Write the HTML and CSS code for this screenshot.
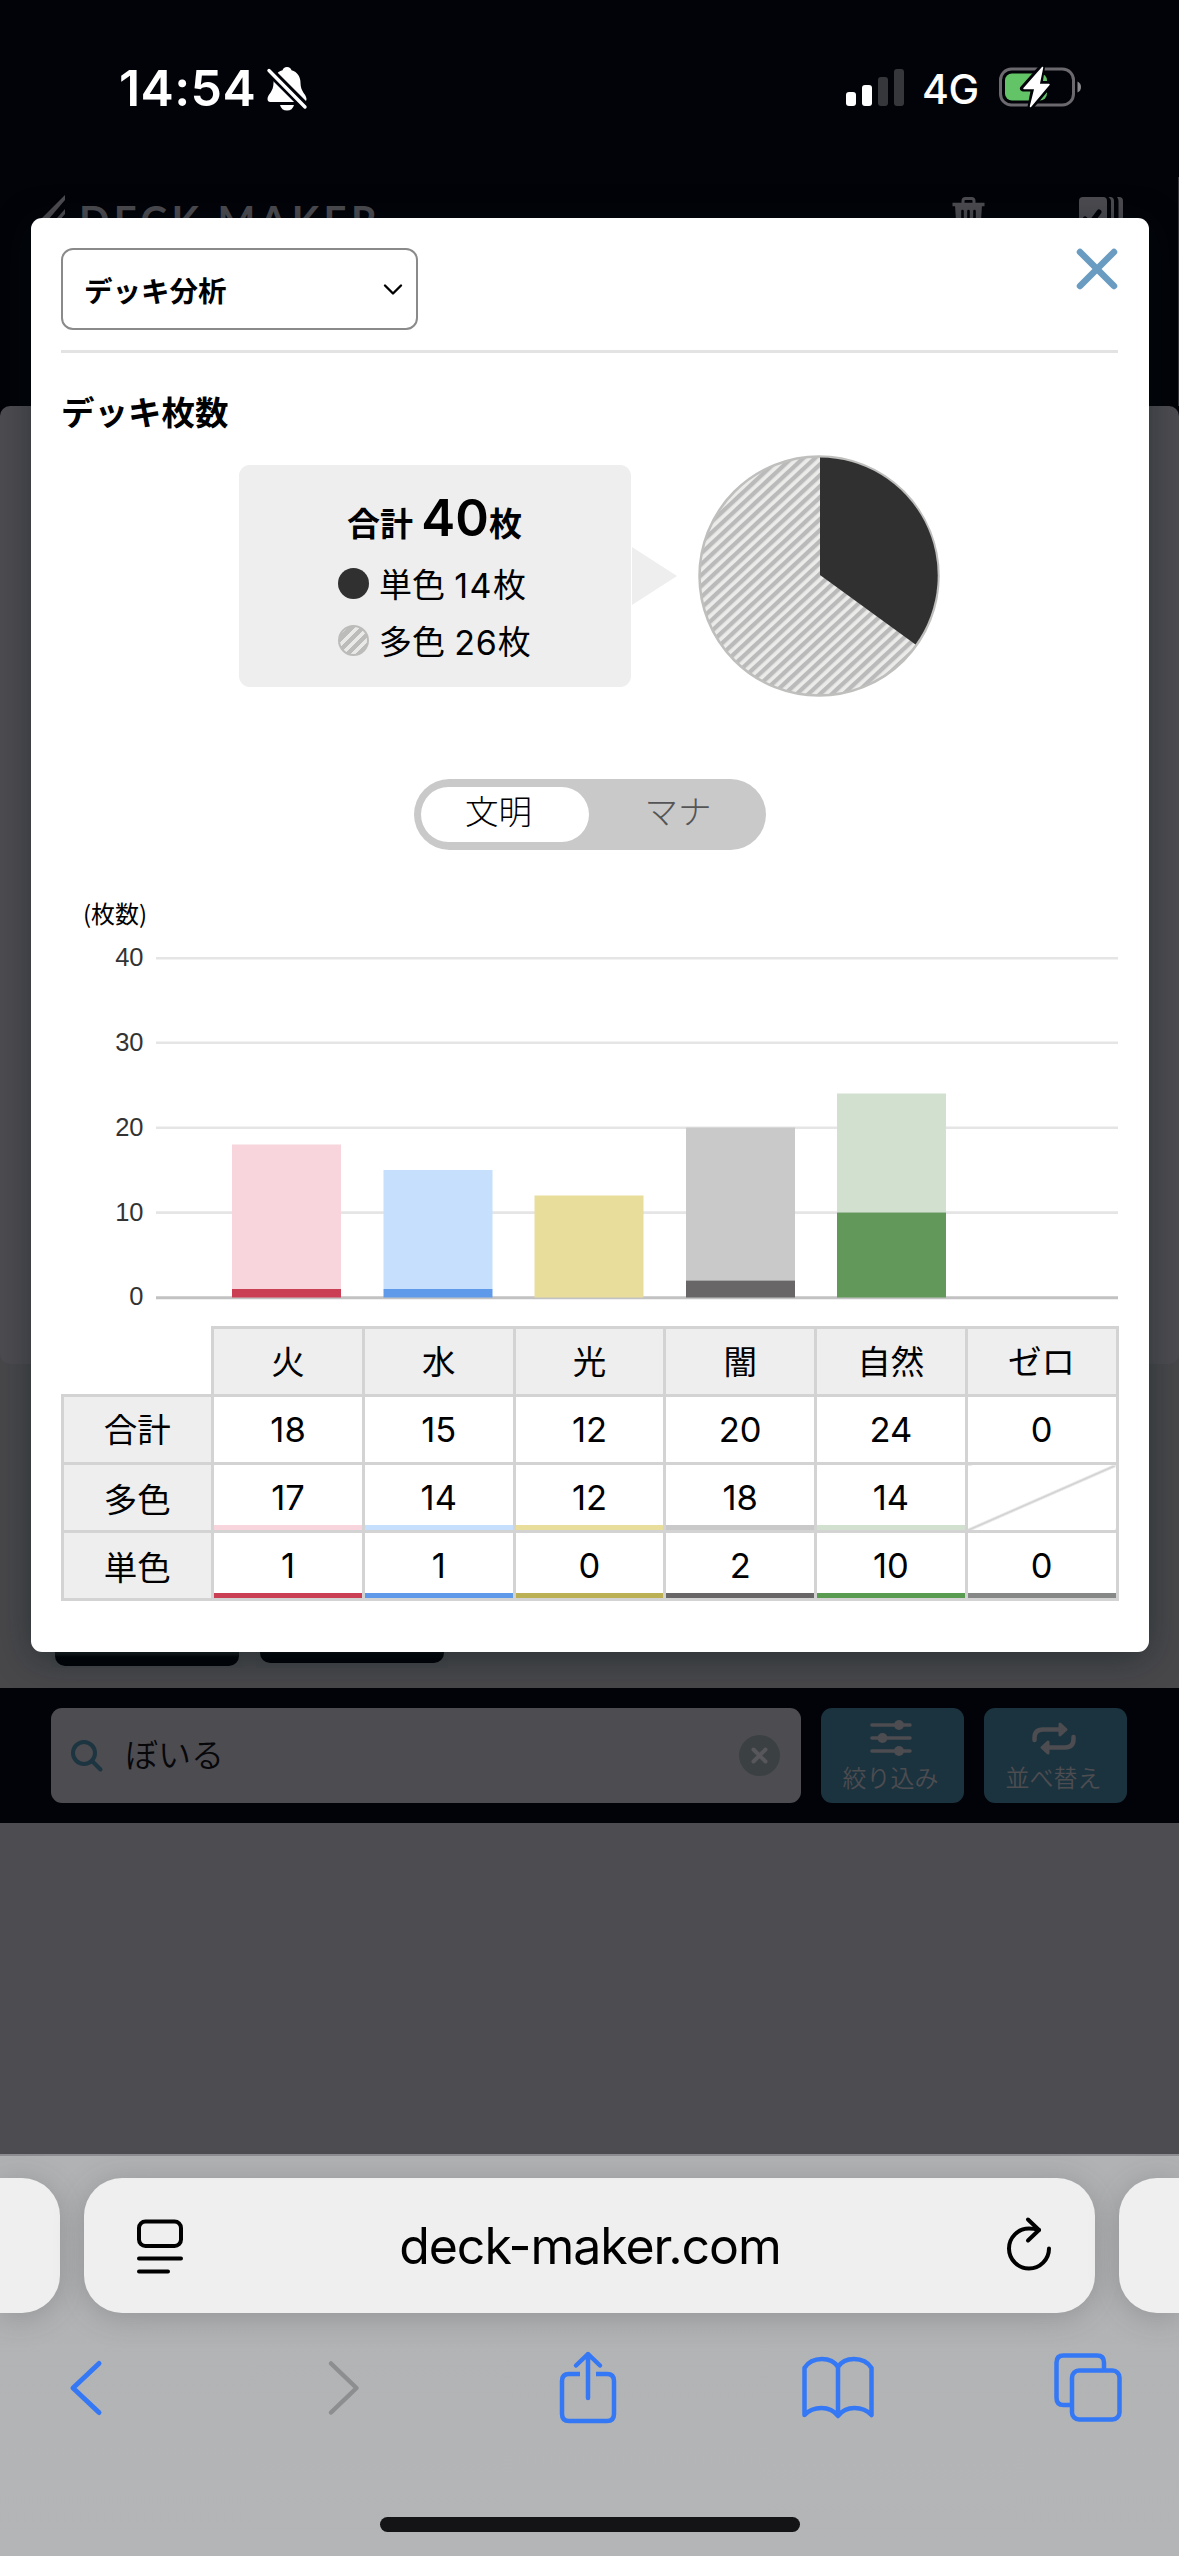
FILE: index.html
```html
<!DOCTYPE html>
<html lang="ja">
<head>
<meta charset="utf-8">
<title>DECK MAKER</title>
<link rel="stylesheet" href="styles.css">
</head>
<body>
<div class="screen">
  <header class="top">
    <div class="status">
      <div class="status-left">
        <span class="clock">14:54</span>
        <svg class="bell" width="40" height="44" viewBox="0 0 40 44">
          <path d="M20 0C17.500 0 16 1.500 15.500 3.300C9.500 5 6.500 10 6.500 16C6.500 25 0.500 27.500 0.500 32Q0.500 35 3.500 35H36.500Q39.500 35 39.500 32C39.500 27.500 33.500 25 33.500 16C33.500 10 30.500 5 24.500 3.300C24 1.500 22.500 0 20 0Z" fill="#fff"/>
          <path d="M13 38H27Q25.500 43.500 20 43.500Q14.500 43.500 13 38Z" fill="#fff"/>
          <path d="M2 3.500L38.500 40" stroke="#020308" stroke-width="9"/>
          <path d="M2 3.500L38 40" stroke="#fff" stroke-width="3.400" stroke-linecap="round"/>
        </svg>
      </div>
      <div class="status-right">
        <svg width="58" height="38" viewBox="0 0 58 38">
          <rect x="0" y="23" width="10" height="14" rx="3" fill="#fff"/>
          <rect x="16" y="16" width="10" height="21" rx="3" fill="#fff"/>
          <rect x="32" y="8" width="10" height="29" rx="3" fill="#35373b"/>
          <rect x="48" y="0" width="10" height="37" rx="3" fill="#35373b"/>
        </svg>
        <span class="network">4G</span>
        <svg class="battery" width="84" height="42" viewBox="0 0 84 42">
          <rect x="1.500" y="3" width="73" height="36" rx="11" fill="none" stroke="#6b696e" stroke-width="3"/>
          <path d="M78.500 15.500Q82 17 82 21Q82 25 78.500 26.500Z" fill="#8a898c"/>
          <rect x="6" y="7.500" width="42" height="27" rx="7" fill="#62c466"/>
          <path d="M43 1L24 22.500H35L31.500 41L51 18H40.500Z" fill="#fff" stroke="#020308" stroke-width="6" stroke-linejoin="round"/>
          <path d="M43.500 1.500L25 22.500H36L31.500 40.500L50 18.500H40Z" fill="#fff" stroke="#fff" stroke-width="1.500" stroke-linejoin="round"/>
        </svg>
      </div>
    </div>
    <div class="brand-row">
      <div class="brand">
        <svg width="30" height="40" viewBox="0 0 30 40">
          <path d="M28 0V5L5 32H0V28Z M28 14V19L17 32H12Z" fill="#4d4c51"/>
        </svg>
        <span>DECK MAKER</span>
      </div>
      <div class="tools">
        <svg width="33" height="42" viewBox="0 0 33 42">
          <path d="M11 7V4Q11 1.500 13.500 1.500H19.500Q22 1.500 22 4V7" fill="none" stroke="#4d4c51" stroke-width="3"/>
          <path d="M0.500 7.500H32.500" stroke="#4d4c51" stroke-width="3.500"/>
          <path d="M3 8H30L28 40H5Z" fill="#4d4c51"/>
          <path d="M10.500 14V34M16.500 14V34M22.500 14V34" stroke="#020308" stroke-width="2.600" stroke-linecap="round"/>
        </svg>
        <svg width="44" height="42" viewBox="0 0 44 42">
          <rect width="28" height="42" rx="4" fill="#4d4c51"/>
          <path d="M29.500 0H31Q35 0 35 4V42H32V4Q32 2 29.500 0Z M38 0H40Q44 0 44 4V42H39.500V4Q39.500 2 38 0Z" fill="#4d4c51"/>
          <path d="M6 22L11 27L20 15" fill="none" stroke="#020308" stroke-width="5" stroke-linecap="round"/>
        </svg>
      </div>
    </div>
  </header>

  <main class="page">
    <section class="deck-panel"></section>
    <section class="cards">
      <div class="card-slot"><div class="card"></div></div>
      <div class="card-slot"><div class="card card-short"></div></div>
    </section>
    <section class="search-bar">
      <div class="search">
        <svg width="32" height="32" viewBox="0 0 32 32" fill="none" stroke="#1c3541" stroke-width="4" stroke-linecap="round">
          <circle cx="13" cy="13" r="11"/><path d="M21 21L29.500 29.500"/>
        </svg>
        <span class="query">ぼいる</span>
        <svg width="41" height="41" viewBox="0 0 41 41">
          <circle cx="20.500" cy="20.500" r="20.500" fill="#3b4043"/>
          <path d="M14.500 14.500L26.500 26.500M26.500 14.500L14.500 26.500" stroke="#57575b" stroke-width="4" stroke-linecap="round"/>
        </svg>
      </div>
      <div class="action">
        <svg width="42" height="38" viewBox="0 0 42 38" stroke="#4d4c51" stroke-width="3.600" stroke-linecap="round">
          <path d="M2 6H40M2 19H40M2 32H40"/>
          <g fill="#4d4c51" stroke="none"><circle cx="29" cy="6" r="5"/><circle cx="12.500" cy="19" r="5"/><circle cx="29" cy="32" r="5"/></g>
        </svg>
        <span>絞り込み</span>
      </div>
      <div class="action">
        <svg width="44" height="38" viewBox="0 0 44 38" fill="none" stroke="#4d4c51" stroke-width="4.500" stroke-linecap="round">
          <path d="M2.500 21V19Q2.500 10.500 11 10.500H28"/>
          <path d="M41.500 18V20Q41.500 28.500 33 28.500H16"/>
          <path d="M28 5L34 10.500L28 16ZM16 23L10 28.500L16 34Z" fill="#4d4c51" stroke-width="3" stroke-linejoin="round"/>
        </svg>
        <span>並べ替え</span>
      </div>
    </section>
  </main>

  <footer class="browser">
    <div class="tabs-row">
      <div class="side-tab left-tab"></div>
      <div class="address">
        <svg width="46" height="56" viewBox="0 0 46 56" fill="none" stroke="#000" stroke-width="4" stroke-linecap="round">
          <rect x="2" y="3.500" width="42" height="24.500" rx="6.500"/><path d="M2 40.500H44M2 53.500H31"/>
        </svg>
        <span>deck-maker.com</span>
        <svg width="46" height="56" viewBox="0 0 46 56" fill="none" stroke="#000" stroke-width="4" stroke-linecap="round" stroke-linejoin="round">
          <path d="M43 30.500A20 20 0 1 1 23 10.500Q28 10.500 33 12"/><path d="M22 1.500L33 12L22 22.500"/>
        </svg>
      </div>
      <div class="side-tab right-tab"></div>
    </div>
    <nav class="toolbar">
      <svg class="back" width="32" height="72" viewBox="0 0 32 72" fill="none" stroke="#3478f6" stroke-width="5" stroke-linecap="round" stroke-linejoin="round"><path d="M29 12.500L3 37L29 61.500"/></svg>
      <svg class="forward" width="32" height="72" viewBox="0 0 32 72" fill="none" stroke="#8d8e90" stroke-width="4.500" stroke-linecap="round" stroke-linejoin="round"><path d="M3 12.500L28.500 37L3 61.500"/></svg>
      <svg width="58" height="74" viewBox="0 0 58 74" fill="none" stroke="#3478f6" stroke-width="4.500" stroke-linecap="butt" stroke-linejoin="round">
        <path d="M21 23H10Q3 23 3 30V63Q3 70 10 70H48Q55 70 55 63V30Q55 23 48 23H37"/><path d="M29 47V3M17 14.500L29 3L41 14.500" stroke-linecap="round"/>
      </svg>
      <svg width="72" height="72" viewBox="0 0 72 72" fill="none" stroke="#3478f6" stroke-width="4.500" stroke-linejoin="round">
        <path d="M36 16Q31 8 20 8Q8 8 2.500 17V64Q9 57 19.500 57Q30 57 36 65Q42 57 52.500 57Q63 57 69.500 64V17Q64 8 52 8Q41 8 36 16ZM36 16V65"/>
      </svg>
      <svg width="68" height="72" viewBox="0 0 68 72" fill="none" stroke="#3478f6" stroke-width="4.500">
        <path d="M18 54H9.500Q2.500 54 2.500 47V11.500Q2.500 4.500 9.500 4.500H43Q50 4.500 50 11.500V20"/><rect x="18" y="19.500" width="47.500" height="49" rx="7"/>
      </svg>
    </nav>
    <div class="home-indicator"></div>
  </footer>

  <div class="modal">
    <div class="modal-head">
      <div class="select">
        <span>デッキ分析</span>
        <svg width="20" height="12" viewBox="0 0 20 12" fill="none" stroke="#000" stroke-width="2.400" stroke-linecap="round" stroke-linejoin="round"><path d="M2 1.500L10 9.500L18 1.500"/></svg>
      </div>
      <svg class="close" width="42" height="42" viewBox="0 0 42 42" stroke="#6a9cc2" stroke-width="6.500" stroke-linecap="round"><path d="M4 4L38 38M38 4L4 38"/></svg>
    </div>
    <h2>デッキ枚数</h2>
    <div class="summary">
      <div class="totals">
        <p class="sum">合計 <b>40</b>枚</p>
        <p class="kind"><i class="dot mono"></i>単色 <span class="narrow">14</span>枚</p>
        <p class="kind"><i class="dot multi"></i>多色 <span>26</span>枚</p>
      </div>
      <div class="pointer"></div>
      <svg class="pie" width="242" height="242" viewBox="0 0 242 242">
        <defs>
          <pattern id="stripes" width="8" height="8" patternUnits="userSpaceOnUse" patternTransform="rotate(47)">
            <rect width="8" height="8" fill="#ebebea"/><rect width="4.300" height="8" fill="#bababa"/>
          </pattern>
        </defs>
        <circle cx="121" cy="121" r="119.500" fill="url(#stripes)" stroke="#bfc0bd" stroke-width="2.500"/>
        <path d="M122 120V2.500A118 118 0 0 1 217.500 189.400Z" fill="#303030"/>
      </svg>
    </div>
    <div class="toggle"><span class="on">文明</span><span class="off">マナ</span></div>
    <svg class="chart" width="1057" height="430" viewBox="61 880 1057 430">
      <text class="unit" x="83" y="923">(枚数)</text>
      <g stroke="#e5e5e5" stroke-width="2.600">
        <path d="M156 958.200H1118M156 1042.800H1118M156 1127.700H1118M156 1212.600H1118"/>
      </g>
      <path d="M156 1297.800H1118" stroke="#c2c2c2" stroke-width="3"/>
      <g class="axis" text-anchor="end">
        <text x="143.500" y="966">40</text><text x="143.500" y="1051">30</text><text x="143.500" y="1136">20</text><text x="143.500" y="1221">10</text><text x="143.500" y="1305">0</text>
      </g>
      <rect x="232" y="1144.500" width="109" height="144.500" fill="#f8d5dc"/><rect x="232" y="1289" width="109" height="8.500" fill="#cb3f54"/>
      <rect x="383.500" y="1170" width="109" height="119" fill="#c6dffd"/><rect x="383.500" y="1289" width="109" height="8.500" fill="#5f99ea"/>
      <rect x="534.500" y="1195.500" width="109" height="102" fill="#e9dd9c"/>
      <rect x="686" y="1127.500" width="109" height="153" fill="#c9c9c9"/><rect x="686" y="1280.500" width="109" height="17" fill="#696667"/>
      <rect x="837" y="1093.500" width="109" height="119" fill="#d2e0cf"/><rect x="837" y="1212.500" width="109" height="85" fill="#62985a"/>
    </svg>
    <table>
      <tr><td class="blank"></td><th>火</th><th>水</th><th>光</th><th>闇</th><th>自然</th><th>ゼロ</th></tr>
      <tr><th>合計</th><td>18</td><td>15</td><td>12</td><td>20</td><td>24</td><td>0</td></tr>
      <tr class="lined"><th>多色</th><td class="fire-l">17</td><td class="water-l">14</td><td class="light-l">12</td><td class="dark-l">18</td><td class="nature-l">14</td><td class="none"></td></tr>
      <tr class="lined"><th>単色</th><td class="fire">1</td><td class="water">1</td><td class="light">0</td><td class="dark">2</td><td class="nature">10</td><td class="zero">0</td></tr>
    </table>
  </div>
</div>
</body>
</html>
```
FILE: styles.css
```css
* { box-sizing: border-box; }
body { margin: 0; font-family: Inter, "Noto Sans CJK JP", sans-serif; color: #000; }
svg { display: block; flex: none; overflow: visible; }
p, h2 { margin: 0; }

.screen { position: relative; width: 1179px; height: 2556px; overflow: hidden; display: flex; flex-direction: column; background: #4d4c51; }

.top { height: 406px; background: #020308; display: flex; flex-direction: column; }
.status { height: 177px; padding: 67px 96px 0 119px; display: flex; justify-content: space-between; color: #fff; }
.status-left, .status-right { display: flex; align-items: flex-start; }
.clock { width: 148px; font-size: 50px; font-weight: 600; line-height: 42px; letter-spacing: 0.400px; }
.status-right { padding-top: 2px; }
.network { width: 95px; padding-left: 18px; font-size: 41px; font-weight: 500; line-height: 41px; letter-spacing: -0.500px; }
.battery { margin-top: -3px; }
.brand-row { height: 229px; padding: 18px 55px 0 37px; display: flex; justify-content: space-between; border-right: 1px solid #38373b; }
.brand { display: flex; gap: 12px; color: #4d4c51; }
.brand span { font: 700 40px/48px Lato, sans-serif; letter-spacing: 4.400px; padding-top: 1px; white-space: nowrap; }
.tools { display: flex; gap: 94px; padding-top: 2px; }

.page { height: 1748px; background: linear-gradient(#020308 0 20px, #48484b 20px 1282px, #4d4c51 1282px); display: flex; flex-direction: column; }
.deck-panel { height: 958px; background: #4d4c51; border-radius: 10px; }
.cards { height: 324px; padding-left: 51px; display: flex; gap: 13px; align-items: flex-start; }
.card-slot { width: 192px; height: 304px; padding: 0 4px; background: #46474a; }
.card { height: 302px; border-radius: 10px; background: linear-gradient(to top, #020307 9px, #171b1d 13px); }
.card-short { height: 299px; }
.search-bar { position: relative; z-index: 1; height: 135px; background: #020308; padding: 20px 52px 20px 51px; display: flex; gap: 20px; }
.search { width: 750px; height: 95px; border-radius: 11px; background: #4d4c51; padding: 0 21px 0 20px; display: flex; align-items: center; }
.query { flex: 1; padding: 0 0 5px 22px; font-size: 33px; color: #07070a; font-weight: 350; }
.action { width: 143px; height: 95px; border-radius: 11px; background: #1b333e; color: #4d4c51; padding: 11px 4px 0 0; display: flex; flex-direction: column; align-items: center; font-size: 24px; line-height: 34px; font-weight: 350; }
.action span { margin-top: 5px; }

.browser { height: 402px; background: linear-gradient(#b1b2b4, #b4b5b7); border-top: 2px solid #8e8e92; padding-top: 22px; display: flex; flex-direction: column; align-items: center; }
.tabs-row { width: 1179px; height: 135px; display: flex; justify-content: space-between; }
.side-tab, .address { background: #efefef; box-shadow: 0 4px 30px rgba(60, 65, 65, .28); }
.side-tab { width: 60px; }
.left-tab { border-radius: 0 38px 38px 0; }
.right-tab { border-radius: 38px 0 0 38px; }
.address { width: 1011px; border-radius: 38px; padding: 0 43px 0 53px; display: flex; align-items: center; justify-content: space-between; font-size: 50px; letter-spacing: -1.050px; }
.address span { margin-right: 9px; }
.toolbar { width: 1179px; height: 106px; padding: 38px 3px 0 0; display: grid; grid-template-columns: repeat(5, 250px); justify-content: center; justify-items: center; align-items: start; }
.back { margin-right: 4px; }
.forward { margin-left: 11px; }
.home-indicator { width: 420px; height: 15px; margin-top: 98px; border-radius: 8px; background: #141417; }

.modal { position: absolute; left: 31px; top: 218px; width: 1118px; height: 1434px; background: #fff; border-radius: 11px; padding: 30px 31px 0 30px; box-shadow: 0 6px 36px rgba(2, 20, 24, .42); display: flex; flex-direction: column; }
.modal-head { height: 105px; border-bottom: 3px solid #e3e3e3; display: flex; justify-content: space-between; align-items: flex-start; }
.select { width: 357px; height: 82px; border: 2.500px solid #8a8a8a; border-radius: 12px; padding: 1px 13px 0 21px; display: flex; align-items: center; justify-content: space-between; font: 600 28.500px "Noto Sans CJK JP", sans-serif; }
h2 { height: 102px; padding: 34px 0 0; font: 600 33.500px/48px "Noto Sans CJK JP", sans-serif; }
.summary { height: 242px; padding-left: 178px; display: flex; align-items: flex-start; }
.totals { width: 392px; height: 222px; margin-top: 10px; border-radius: 11px; background: #eee; padding-top: 19px; font-size: 33px; }
.sum { height: 73px; line-height: 68px; padding-left: 108px; font-weight: 600; white-space: nowrap; }
.sum b { font-size: 51px; font-weight: 600; }
.kind { height: 57px; line-height: 57px; padding-left: 99px; display: flex; align-items: center; white-space: pre; font-weight: 380; }
.kind span { font-size: 34px; letter-spacing: 0.800px; }
.kind .narrow { letter-spacing: 1.500px; }
.dot { width: 31px; height: 31px; border-radius: 50%; margin: 0 10px 5px 0; }
.mono { background: #303030; }
.multi { border: 2px solid #bcbcbb; background: repeating-linear-gradient(-45deg, #e9e9e8 0 3.500px, #bcbcbb 3.500px 8px); }
.pointer { width: 45px; height: 58px; margin: 92px 21px 0 1px; background: #eee; clip-path: polygon(0 0, 100% 50%, 0 100%); }
.toggle { width: 352px; height: 71px; margin: 82px 0 0 353px; border-radius: 36px; background: #c9c9ca; padding: 8px 7px; display: flex; font-size: 33.500px; line-height: 51px; font-weight: 300; }
.toggle span { width: 168px; height: 55px; text-align: center; }
.toggle .on { background: #fff; border-radius: 28px; padding-right: 13px; }
.toggle .off { color: #555; padding-left: 10px; }
.chart { margin-top: 30px; }
.unit { font: 400 24px "Noto Sans CJK JP", sans-serif; }
.axis { font: 25.500px "Liberation Sans", sans-serif; fill: #333; }
table { margin: 16px 0 0 -0.500px; width: 1058px; height: 275px; table-layout: fixed; border-collapse: collapse; font-size: 34.500px; line-height: 40px; text-align: center; }
th, td { height: 68px; padding: 0; border: 3px solid #d3d3d3; font-weight: 400; background: #fff bottom / 100% 5px no-repeat; }
th { background: #eee; font-size: 33.500px; }
td.blank { border: 0; border-right: 3px solid #d3d3d3; border-bottom: 3px solid #d3d3d3; }
.lined th { padding-top: 5px; }
.fire-l { background-image: linear-gradient(#f8d5dc, #f8d5dc); }
.water-l { background-image: linear-gradient(#c6dffd, #c6dffd); }
.light-l { background-image: linear-gradient(#e9dd9c, #e9dd9c); }
.dark-l { background-image: linear-gradient(#c9c9c9, #c9c9c9); }
.nature-l { background-image: linear-gradient(#d2e0cf, #d2e0cf); }
.fire { background-image: linear-gradient(#cb3f54, #cb3f54); }
.water { background-image: linear-gradient(#5f99ea, #5f99ea); }
.light { background-image: linear-gradient(#bcb054, #bcb054); }
.dark { background-image: linear-gradient(#696667, #696667); }
.nature { background-image: linear-gradient(#5a9b52, #5a9b52); }
.zero { background-image: linear-gradient(#868787, #868787); }
td.none { background: linear-gradient(to bottom right, #fff calc(50% - 1.500px), #d3d3d3 calc(50% - 1px), #d3d3d3 calc(50% + 1px), #fff calc(50% + 1.500px)); }
```
